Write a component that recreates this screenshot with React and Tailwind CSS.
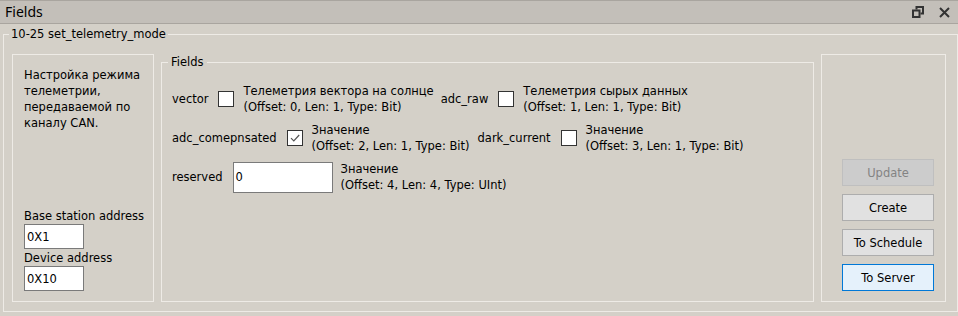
import React from "react";

function Check({ checked }) {
  return (
    <div className="w-[16px] h-[16px] shrink-0 bg-white border border-[#333333] flex items-center justify-center">
      {checked && (
        <svg width="12" height="12" viewBox="0 0 12 12">
          <path d="M2 6.2 L4.8 9 L10.2 3" fill="none" stroke="#555555" strokeWidth="1.2" />
        </svg>
      )}
    </div>
  );
}

function Desc({ title, meta }) {
  return (
    <div className="flex flex-col leading-[16px] whitespace-nowrap">
      <span>{title}</span>
      <span>{meta}</span>
    </div>
  );
}

function Btn({ children, kind }) {
  const cls =
    kind === "disabled"
      ? "bg-[#cccccc] border-[#bfbfbf] text-[#838383]"
      : kind === "focus"
      ? "bg-[#e5f1fb] border-[#0078d7] text-black"
      : "bg-[#e1e1e1] border-[#adadad] text-black";
  return (
    <div className={`w-[92px] h-[27px] border flex items-center justify-center ${cls}`}>
      {children}
    </div>
  );
}

export default function App() {
  return (
    <div className="w-[958px] h-[316px] bg-[#d4d0c8] text-black font-['DejaVu_Sans',sans-serif] text-[11.5px] leading-[16px] overflow-hidden">
      {/* title bar */}
      <div className="h-[24px] bg-[#c3bfb9] border-t border-b border-[#a9a59f] flex items-center justify-between pl-[5px] pr-[8px]">
        <span className="font-['Noto_Sans',sans-serif] text-[14px] leading-[20px]">Fields</span>
        <div className="flex items-center gap-[15px]">
          <svg width="12" height="12" viewBox="0 0 12 12">
            <path d="M4.5 3.5 V1 H11 V7.5 H8.5" fill="none" stroke="#333333" strokeWidth="2" />
            <rect x="1" y="4.5" width="6.5" height="6.5" fill="none" stroke="#333333" strokeWidth="2" />
          </svg>
          <svg width="11" height="11" viewBox="0 0 11 11">
            <path d="M1 1 L10 10 M10 1 L1 10" stroke="#333333" strokeWidth="2" />
          </svg>
        </div>
      </div>

      {/* outer group */}
      <div className="pt-[10px] pl-[3px]">
        <div className="relative w-[955px] h-[278px] border border-[#eeebe6] pt-[19px] pl-[8px] flex gap-[7px]">
          <span className="absolute left-[5px] top-[-9px] bg-[#d4d0c8] px-[2px] leading-[16px]">
            10-25 set_telemetry_mode
          </span>

          {/* left box */}
          <div className="w-[142px] h-[248px] border border-[#eeebe6] pt-[12px] pl-[11px] pb-[10px] flex flex-col justify-between">
            <div className="leading-[16px]">
              Настройка режима
              <br />
              телеметрии,
              <br />
              передаваемой по
              <br />
              каналу CAN.
            </div>
            <div className="flex flex-col">
              <span className="leading-[16px]">Base station address</span>
              <div className="w-[60px] h-[25px] bg-white border border-[#7a7a7a] flex items-center pl-[2px]">0X1</div>
              <span className="leading-[16px] mt-[1px]">Device address</span>
              <div className="w-[60px] h-[25px] bg-white border border-[#7a7a7a] flex items-center pl-[2px]">0X10</div>
            </div>
          </div>

          {/* fields box */}
          <div className="relative mt-[8px] w-[653px] h-[240px] border border-[#eeebe6] pt-[20px] pl-[10px] flex flex-col gap-[7px]">
            <span className="absolute left-[6px] top-[-9px] bg-[#d4d0c8] px-[3px] leading-[16px]">Fields</span>

            <div className="flex items-center h-[32px]">
              <span>vector</span>
              <div className="ml-[10px]"><Check /></div>
              <div className="ml-[9px]">
                <Desc title="Телеметрия вектора на солнце" meta="(Offset: 0, Len: 1, Type: Bit)" />
              </div>
              <span className="ml-[7px]">adc_raw</span>
              <div className="ml-[10px]"><Check /></div>
              <div className="ml-[9px]">
                <Desc title="Телеметрия сырых данных" meta="(Offset: 1, Len: 1, Type: Bit)" />
              </div>
            </div>

            <div className="flex items-center h-[32px]">
              <span>adc_comepnsated</span>
              <div className="ml-[10px]"><Check checked /></div>
              <div className="ml-[9px]">
                <Desc title="Значение" meta="(Offset: 2, Len: 1, Type: Bit)" />
              </div>
              <span className="ml-[8px]">dark_current</span>
              <div className="ml-[10px]"><Check /></div>
              <div className="ml-[9px]">
                <Desc title="Значение" meta="(Offset: 3, Len: 1, Type: Bit)" />
              </div>
            </div>

            <div className="flex items-center h-[32px]">
              <span>reserved</span>
              <div className="ml-[10px] w-[100px] h-[31px] bg-white border border-[#7a7a7a] flex items-center pl-[2px]">0</div>
              <div className="ml-[8px]">
                <Desc title="Значение" meta="(Offset: 4, Len: 4, Type: UInt)" />
              </div>
            </div>
          </div>

          {/* right box */}
          <div className="w-[125px] h-[248px] border border-[#eeebe6] pl-[20px] pb-[10px] flex flex-col justify-end gap-[8px]">
            <Btn kind="disabled">Update</Btn>
            <Btn>Create</Btn>
            <Btn>To Schedule</Btn>
            <Btn kind="focus">To Server</Btn>
          </div>
        </div>
      </div>
    </div>
  );
}
